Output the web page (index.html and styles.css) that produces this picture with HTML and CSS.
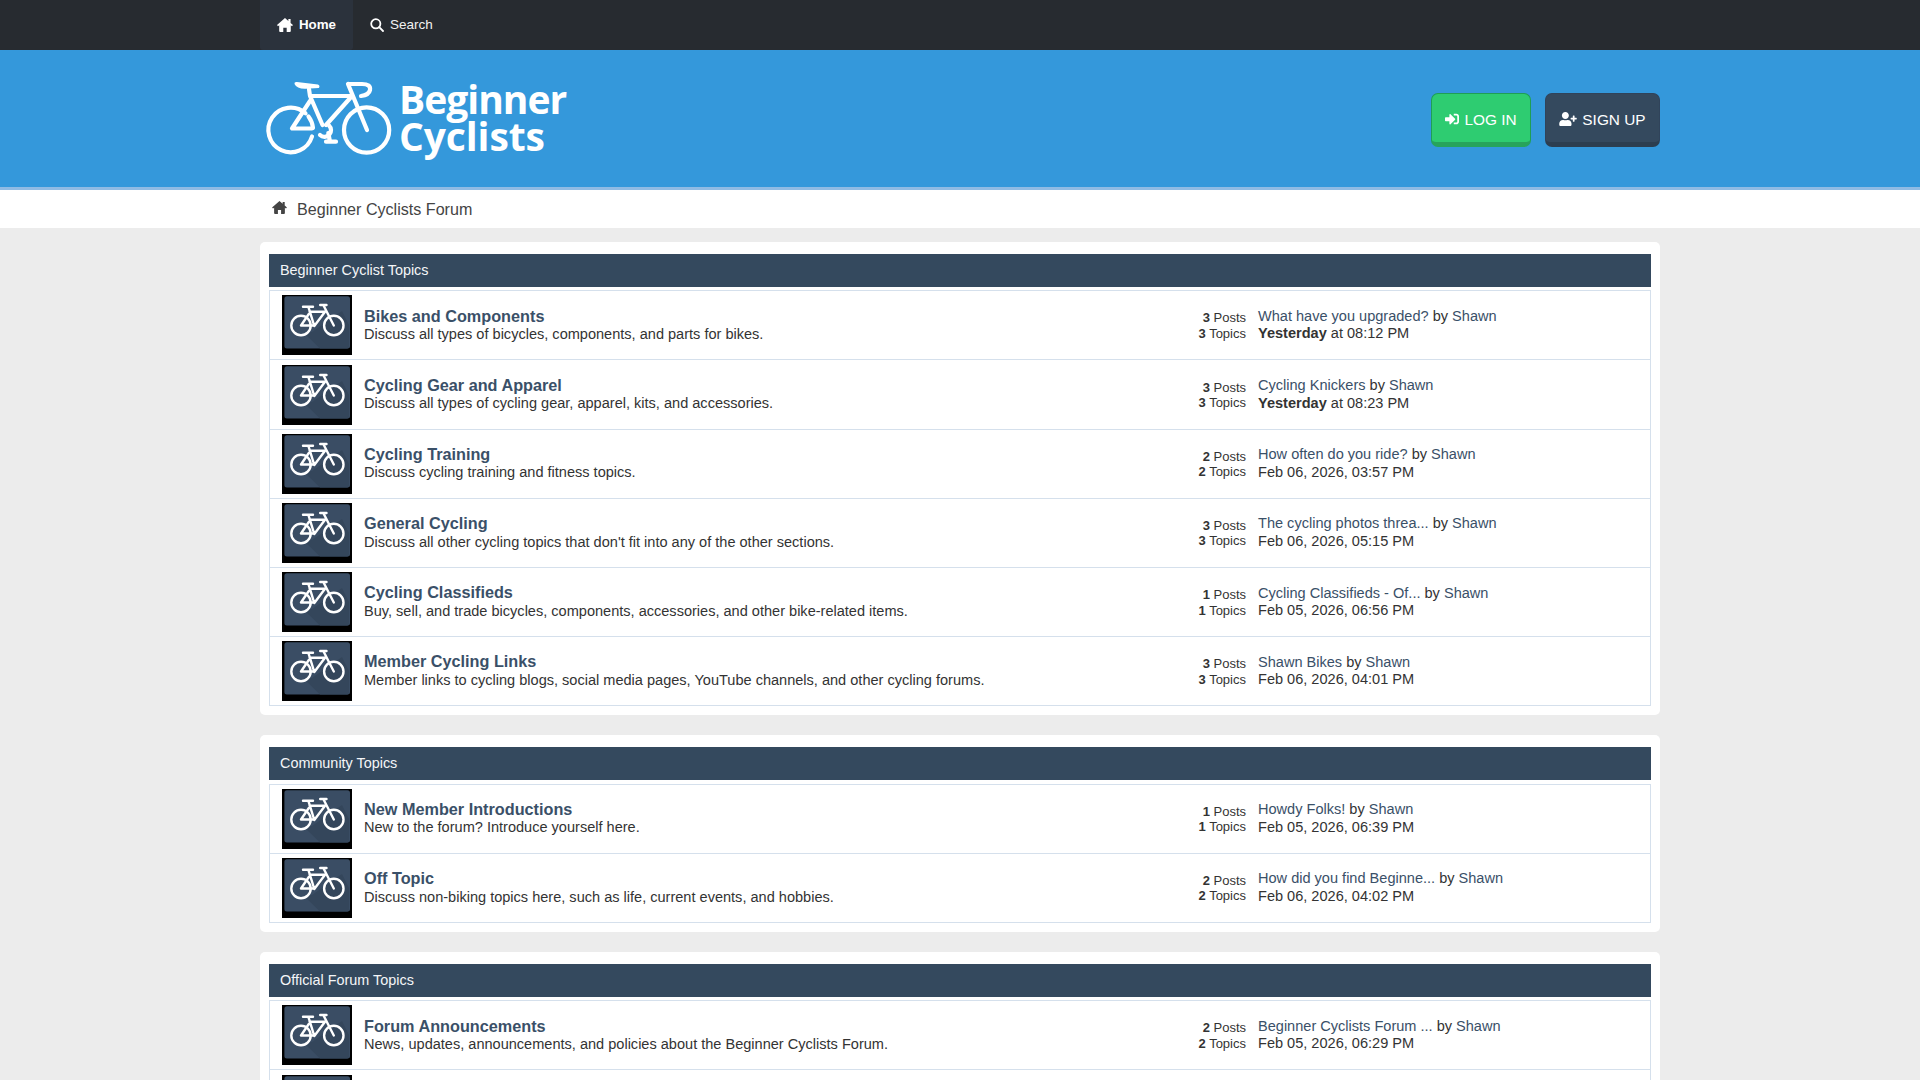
FILE: index.html
```html
<!DOCTYPE html>
<html lang="en">
<head>
<meta charset="utf-8">
<title>Beginner Cyclists Forum</title>
<link rel="stylesheet" href="styles.css">
</head>
<body>
<svg class="defs" width="0" height="0" aria-hidden="true">
  <symbol id="i-home" viewBox="0 0 16 14"><path d="M8 0L11.4 3V1H13.6V4.9L16 7L15 8.2L13.8 7.2V13Q13.8 14 12.8 14H9.7V9.7H6.3V14H3.2Q2.2 14 2.2 13V7.2L1 8.2L0 7Z"/></symbol>
  <symbol id="i-signin" viewBox="0 0 512 512"><path d="M416 448h-84c-6.6 0-12-5.4-12-12v-40c0-6.6 5.4-12 12-12h84c17.7 0 32-14.3 32-32V160c0-17.7-14.3-32-32-32h-84c-6.6 0-12-5.4-12-12V76c0-6.6 5.4-12 12-12h84c53 0 96 43 96 96v192c0 53-43 96-96 96zm-47-201L201 79c-15-15-41-4.5-41 17v96H24c-13.3 0-24 10.7-24 24v96c0 13.3 10.7 24 24 24h136v96c0 21.5 26 32 41 17l168-168c9.3-9.4 9.3-24.6 0-34z"/></symbol>
  <symbol id="i-userplus" viewBox="0 0 640 512"><path d="M624 208h-64v-64c0-8.8-7.2-16-16-16h-32c-8.8 0-16 7.2-16 16v64h-64c-8.8 0-16 7.2-16 16v32c0 8.8 7.2 16 16 16h64v64c0 8.8 7.2 16 16 16h32c8.8 0 16-7.2 16-16v-64h64c8.8 0 16-7.2 16-16v-32c0-8.8-7.2-16-16-16zm-400 48c70.7 0 128-57.3 128-128S294.7 0 224 0 96 57.3 96 128s57.3 128 128 128zm89.6 32h-16.7c-22.2 10.2-46.9 16-72.9 16s-50.6-5.8-72.9-16h-16.7C60.2 288 0 348.2 0 422.4V464c0 26.5 21.5 48 48 48h352c26.5 0 48-21.5 48-48v-41.6c0-74.2-60.2-134.4-134.4-134.4z"/></symbol>
  <symbol id="i-forum" viewBox="0 0 70 60">
    <rect width="70" height="60" fill="#000"/>
    <rect x="2.4" y="1.2" width="65.6" height="52.2" rx="2.5" fill="#3a4d64"/>
    <path d="M22 38 L30 37 L60 16 L67 30 V51 A2.5 2.5 0 0 1 65.5 53.4 H38Z" fill="#34465b"/>
    <g fill="none" stroke="#fff" stroke-width="2.4" stroke-linecap="round" stroke-linejoin="round">
      <circle cx="19" cy="30.5" r="9.7"/>
      <circle cx="51.8" cy="30.5" r="9.7"/>
      <path d="M21 11.7H31M26.3 11.7L32.3 31L43 16.7H27.5M26.8 19L19 30.5H32.3M38.2 10H44.5M41.3 10L51.8 30.5"/>
    </g>
  </symbol>
</svg>

<header>
  <nav class="topbar">
    <div class="wrap topbar-inner">
      <a class="tab tab-active" href="#"><svg class="ico-home"><use href="#i-home"/></svg>Home</a>
      <a class="tab" href="#">
        <svg class="ico-search" viewBox="0 0 14 14"><circle cx="5.8" cy="5.8" r="4.6"/><path d="M9.2 9.2L13 13"/></svg>Search</a>
    </div>
  </nav>
  <div class="banner">
    <div class="wrap banner-inner">
      <a class="logo" href="#">
        <svg class="logo-bike" viewBox="0 0 140 90">
          <path class="logo-fill" d="M34.5 9Q34 6.6 37 7L58 9.6Q60.5 11 58.8 13L46 13.8Q37 14.2 34.5 9Z"/>
          <g class="logo-line">
            <path d="M52 61.5A22.3 22.3 0 1 1 45.5 38.3M48.5 41.5A22.3 22.3 0 0 1 53 53"/>
            <circle cx="106.6" cy="55" r="22.6"/>
            <path d="M49 14L50 21H92L66 50M50 21L62.5 50M50 26L32 53.5H52"/>
            <path d="M88 9L107 55M88 9H102Q111 9 110 15Q109 20 101 21"/>
            <path d="M69 50.5A5.8 5.8 0 1 1 60 60"/>
            <path d="M68.3 58L70 66.7M66 66.7H76"/>
          </g>
        </svg>
        <span class="logo-text"><span class="logo-line1">Beginner</span><span class="logo-line2">Cyclists</span></span>
      </a>
      <div class="actions">
        <a class="btn btn-green" href="#"><svg class="ico-signin"><use href="#i-signin"/></svg>LOG IN</a>
        <a class="btn btn-navy" href="#"><svg class="ico-userplus"><use href="#i-userplus"/></svg>SIGN UP</a>
      </div>
    </div>
  </div>
  <div class="crumbs">
    <div class="wrap crumbs-inner"><svg class="ico-crumb"><use href="#i-home"/></svg><a href="#">Beginner Cyclists Forum</a></div>
  </div>
</header>

<main class="wrap">
  <section class="card">
    <h2 class="card-head">Beginner Cyclist Topics</h2>
    <div class="rows">
      <article class="row">
        <svg class="thumb"><use href="#i-forum"/></svg>
        <div class="main"><a class="title" href="#">Bikes and Components</a><p class="desc">Discuss all types of bicycles, components, and parts for bikes.</p></div>
        <div class="stats"><div class="stat-posts"><b>3</b> Posts</div><div><b>3</b> Topics</div></div>
        <div class="last"><div><a href="#">What have you upgraded?</a> by <a href="#">Shawn</a></div><div><b>Yesterday</b> at 08:12 PM</div></div>
      </article>
      <article class="row">
        <svg class="thumb"><use href="#i-forum"/></svg>
        <div class="main"><a class="title" href="#">Cycling Gear and Apparel</a><p class="desc">Discuss all types of cycling gear, apparel, kits, and accessories.</p></div>
        <div class="stats"><div class="stat-posts"><b>3</b> Posts</div><div><b>3</b> Topics</div></div>
        <div class="last"><div><a href="#">Cycling Knickers</a> by <a href="#">Shawn</a></div><div><b>Yesterday</b> at 08:23 PM</div></div>
      </article>
      <article class="row">
        <svg class="thumb"><use href="#i-forum"/></svg>
        <div class="main"><a class="title" href="#">Cycling Training</a><p class="desc">Discuss cycling training and fitness topics.</p></div>
        <div class="stats"><div class="stat-posts"><b>2</b> Posts</div><div><b>2</b> Topics</div></div>
        <div class="last"><div><a href="#">How often do you ride?</a> by <a href="#">Shawn</a></div><div>Feb 06, 2026, 03:57 PM</div></div>
      </article>
      <article class="row">
        <svg class="thumb"><use href="#i-forum"/></svg>
        <div class="main"><a class="title" href="#">General Cycling</a><p class="desc">Discuss all other cycling topics that don't fit into any of the other sections.</p></div>
        <div class="stats"><div class="stat-posts"><b>3</b> Posts</div><div><b>3</b> Topics</div></div>
        <div class="last"><div><a href="#">The cycling photos threa...</a> by <a href="#">Shawn</a></div><div>Feb 06, 2026, 05:15 PM</div></div>
      </article>
      <article class="row">
        <svg class="thumb"><use href="#i-forum"/></svg>
        <div class="main"><a class="title" href="#">Cycling Classifieds</a><p class="desc">Buy, sell, and trade bicycles, components, accessories, and other bike-related items.</p></div>
        <div class="stats"><div class="stat-posts"><b>1</b> Posts</div><div><b>1</b> Topics</div></div>
        <div class="last"><div><a href="#">Cycling Classifieds - Of...</a> by <a href="#">Shawn</a></div><div>Feb 05, 2026, 06:56 PM</div></div>
      </article>
      <article class="row">
        <svg class="thumb"><use href="#i-forum"/></svg>
        <div class="main"><a class="title" href="#">Member Cycling Links</a><p class="desc">Member links to cycling blogs, social media pages, YouTube channels, and other cycling forums.</p></div>
        <div class="stats"><div class="stat-posts"><b>3</b> Posts</div><div><b>3</b> Topics</div></div>
        <div class="last"><div><a href="#">Shawn Bikes</a> by <a href="#">Shawn</a></div><div>Feb 06, 2026, 04:01 PM</div></div>
      </article>
    </div>
  </section>

  <section class="card">
    <h2 class="card-head">Community Topics</h2>
    <div class="rows">
      <article class="row">
        <svg class="thumb"><use href="#i-forum"/></svg>
        <div class="main"><a class="title" href="#">New Member Introductions</a><p class="desc">New to the forum? Introduce yourself here.</p></div>
        <div class="stats"><div class="stat-posts"><b>1</b> Posts</div><div><b>1</b> Topics</div></div>
        <div class="last"><div><a href="#">Howdy Folks!</a> by <a href="#">Shawn</a></div><div>Feb 05, 2026, 06:39 PM</div></div>
      </article>
      <article class="row">
        <svg class="thumb"><use href="#i-forum"/></svg>
        <div class="main"><a class="title" href="#">Off Topic</a><p class="desc">Discuss non-biking topics here, such as life, current events, and hobbies.</p></div>
        <div class="stats"><div class="stat-posts"><b>2</b> Posts</div><div><b>2</b> Topics</div></div>
        <div class="last"><div><a href="#">How did you find Beginne...</a> by <a href="#">Shawn</a></div><div>Feb 06, 2026, 04:02 PM</div></div>
      </article>
    </div>
  </section>

  <section class="card">
    <h2 class="card-head">Official Forum Topics</h2>
    <div class="rows">
      <article class="row">
        <svg class="thumb"><use href="#i-forum"/></svg>
        <div class="main"><a class="title" href="#">Forum Announcements</a><p class="desc">News, updates, announcements, and policies about the Beginner Cyclists Forum.</p></div>
        <div class="stats"><div class="stat-posts"><b>2</b> Posts</div><div><b>2</b> Topics</div></div>
        <div class="last"><div><a href="#">Beginner Cyclists Forum ...</a> by <a href="#">Shawn</a></div><div>Feb 05, 2026, 06:29 PM</div></div>
      </article>
      <article class="row">
        <svg class="thumb"><use href="#i-forum"/></svg>
      </article>
    </div>
  </section>
</main>
</body>
</html>
```

FILE: styles.css
```css
* { box-sizing: border-box; }
html { overflow: hidden; height: 1080px; }
body {
  margin: 0;
  height: 1080px;
  overflow: hidden;
  background: #ececec;
  color: #333;
  font-family: "Liberation Sans", Arial, sans-serif;
  font-size: 14px;
}
a { color: inherit; text-decoration: none; }
.defs { position: absolute; }
.wrap { width: 1400px; margin: 0 auto; }

.topbar { height: 50px; background: #272b30; }
.topbar-inner { display: flex; height: 50px; }
.tab {
  display: flex;
  align-items: center;
  height: 50px;
  padding: 0 17px 1px;
  color: #f2f2f2;
  font-size: 13.5px;
}
.tab-active {
  width: 93px;
  background: #2b323c;
  border-radius: 0 0 3px 3px;
  color: #fff;
  font-size: 13.33px;
  font-weight: bold;
}
.ico-home { width: 16px; height: 14px; margin-right: 6px; fill: #fff; }
.ico-search {
  width: 14px;
  height: 14px;
  margin-right: 6px;
  fill: none;
  stroke: #fff;
  stroke-width: 1.8;
  stroke-linecap: round;
}

.banner { height: 140px; background: #3498db; border-bottom: 3px solid #8fbbe4; }
.banner-inner { display: flex; justify-content: space-between; align-items: flex-start; }
.logo { display: flex; padding-top: 25px; color: #fff; }
.logo-bike { width: 140px; height: 90px; }
.logo-fill { fill: #fff; }
.logo-line {
  fill: none;
  stroke: #fff;
  stroke-width: 4.2;
  stroke-linecap: round;
  stroke-linejoin: round;
}
.logo-text {
  margin: 6px 0 0 -1px;
  font-family: "Open Sans", sans-serif;
  font-size: 39px;
  font-weight: 700;
  line-height: 36.5px;
}
.logo-line1 { display: block; letter-spacing: -1px; }
.logo-line2 { display: block; letter-spacing: -0.1px; }
.actions { display: flex; gap: 14px; padding-top: 43px; }
.btn {
  display: flex;
  align-items: center;
  justify-content: center;
  height: 54px;
  padding-top: 3px;
  border-radius: 7px;
  color: #fff;
  font-size: 15.4px;
}
.btn-green {
  width: 100px;
  background: #2ecc71;
  border: 1px solid #1f9e55;
  border-bottom: 5px solid #27a35c;
}
.btn-navy {
  width: 115px;
  background: #34495e;
  border: 1px solid #30435a;
  border-bottom: 5px solid #2c3e50;
}
.ico-signin { width: 14px; height: 14px; margin: -1px 5px 0 0; fill: #fff; }
.ico-userplus { width: 18px; height: 14px; margin: -1px 5px 0 0; fill: #fff; }

.crumbs { height: 38px; background: #fff; }
.crumbs-inner { display: flex; align-items: center; height: 38px; padding-left: 12px; color: #444; font-size: 16.1px; }
.ico-crumb { width: 15px; height: 13px; margin: -3px 10px 0 0; fill: #444; }

main { padding-top: 14px; }
.card {
  margin-bottom: 20px;
  padding: 12px 9px 9.1px;
  background: #fff;
  border-radius: 5px;
}
.card-head {
  height: 33px;
  margin: 0 0 3.3px;
  padding-left: 11px;
  background: #34495e;
  color: #f4f6f8;
  font-size: 14.4px;
  font-weight: normal;
  line-height: 32px;
}
.rows { border: 1px solid #d5e0ec; border-bottom: 0; }
.row {
  display: flex;
  align-items: center;
  height: 69.17px;
  padding-left: 12px;
  border-bottom: 1px solid #d5e0ec;
}
.thumb { flex: none; width: 70px; height: 60px; margin-right: 12px; }
.main { flex: 1; }
.title { display: block; color: #3a5068; font-size: 16.24px; font-weight: bold; line-height: 17px; }
.desc { margin: 1.5px 0 0; font-size: 14.56px; line-height: 17px; }
.stats { width: 100px; color: #333; font-size: 13px; line-height: 15.5px; text-align: right; }
.stat-posts { margin-top: 1px; }
.last { width: 392px; margin-left: 12px; font-size: 14.56px; line-height: 17.5px; }
.last a { color: #3a5068; }
```
